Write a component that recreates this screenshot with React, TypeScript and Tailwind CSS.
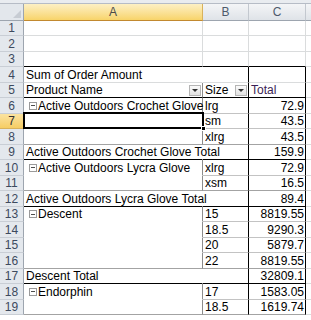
import type { ReactNode } from "react";

type Line = "none" | "grid" | "lite" | "gray" | "black";

type Row = {
  n: number;
  a?: ReactNode;
  b?: string;
  c?: string;
  ab: Line; // bottom of A
  bcb: Line; // bottom of B and C
  ar: Line; // right of A
  br: Line;
  cr: Line;
  sel?: boolean;
};

const lineB: Record<Line, string> = {
  none: "border-b border-b-white",
  grid: "border-b border-b-[#dadcdd]",
  lite: "border-b border-b-[#c3c3c3]",
  gray: "border-b border-b-[#a3a3a3]",
  black: "border-b border-b-black",
};

const lineR: Record<Line, string> = {
  none: "border-r border-r-transparent",
  grid: "border-r border-r-[#dadcdd]",
  lite: "border-r border-r-[#c3c3c3]",
  gray: "border-r border-r-[#8c8c8c]",
  black: "border-r border-r-black",
};

function Toggle({ label }: { label: string }) {
  return (
    <span className="flex items-center pl-[3px]">
      <span className="mr-px flex h-[8px] w-[8px] items-center justify-center border border-[#9a9a9a] bg-white">
        <span className="h-px w-[4px] bg-[#4d4d4d]" />
      </span>
      {label}
    </span>
  );
}

function Drop() {
  return (
    <span className="flex h-[11px] w-[12px] items-center justify-center border border-[#b5b5b5] bg-gradient-to-b from-[#fbfbfb] to-[#e2e2e2]">
      <span className="h-0 w-0 border-x-[3px] border-t-[3px] border-x-transparent border-t-[#333]" />
    </span>
  );
}

const rows: Row[] = [
  { n: 1, ab: "grid", bcb: "grid", ar: "grid", br: "grid", cr: "grid" },
  { n: 2, ab: "grid", bcb: "grid", ar: "grid", br: "grid", cr: "grid" },
  { n: 3, ab: "black", bcb: "black", ar: "grid", br: "grid", cr: "grid" },
  { n: 4, a: "Sum of Order Amount", ab: "grid", bcb: "grid", ar: "none", br: "black", cr: "black" },
  { n: 5, a: "Product Name", b: "Size", c: "Total", ab: "black", bcb: "black", ar: "gray", br: "black", cr: "black" },
  { n: 6, a: <Toggle label="Active Outdoors Crochet Glove" />, b: "lrg", c: "72.9", ab: "none", bcb: "lite", ar: "gray", br: "black", cr: "black" },
  { n: 7, b: "sm", c: "43.5", ab: "none", bcb: "lite", ar: "gray", br: "black", cr: "black", sel: true },
  { n: 8, b: "xlrg", c: "43.5", ab: "gray", bcb: "gray", ar: "gray", br: "black", cr: "black" },
  { n: 9, a: "Active Outdoors Crochet Glove Total", c: "159.9", ab: "black", bcb: "black", ar: "none", br: "black", cr: "black" },
  { n: 10, a: <Toggle label="Active Outdoors Lycra Glove" />, b: "xlrg", c: "72.9", ab: "none", bcb: "lite", ar: "gray", br: "black", cr: "black" },
  { n: 11, b: "xsm", c: "16.5", ab: "gray", bcb: "gray", ar: "gray", br: "black", cr: "black" },
  { n: 12, a: "Active Outdoors Lycra Glove Total", c: "89.4", ab: "black", bcb: "black", ar: "none", br: "black", cr: "black" },
  { n: 13, a: <Toggle label="Descent" />, b: "15", c: "8819.55", ab: "none", bcb: "lite", ar: "gray", br: "black", cr: "black" },
  { n: 14, b: "18.5", c: "9290.3", ab: "none", bcb: "lite", ar: "gray", br: "black", cr: "black" },
  { n: 15, b: "20", c: "5879.7", ab: "none", bcb: "lite", ar: "gray", br: "black", cr: "black" },
  { n: 16, b: "22", c: "8819.55", ab: "gray", bcb: "gray", ar: "gray", br: "black", cr: "black" },
  { n: 17, a: "Descent Total", c: "32809.1", ab: "black", bcb: "black", ar: "none", br: "black", cr: "black" },
  { n: 18, a: <Toggle label="Endorphin" />, b: "17", c: "1583.05", ab: "none", bcb: "lite", ar: "gray", br: "black", cr: "black" },
  { n: 19, b: "18.5", c: "1619.74", ab: "gray", bcb: "gray", ar: "gray", br: "black", cr: "black" },
];

export default function App() {
  return (
    <div
      className="h-[320px] w-[311px] overflow-hidden bg-white text-[12px] leading-none text-black"
      style={{ fontFamily: '"Liberation Sans", Arial, sans-serif' }}
    >
      {/* strip above the grid */}
      <div className="h-[4px] border-b border-[#b6bcc6] bg-[#e9ecf0]" />

      {/* column headers */}
      <div className="flex h-[17px]">
        <div className="relative w-[24px] shrink-0 border-r border-b border-[#9da5af] bg-[#e3e7ec]">
          <span className="absolute bottom-[2px] right-[2px] h-0 w-0 border-b-[8px] border-l-[8px] border-b-[#c7ccd3] border-l-transparent" />
        </div>
        <div className="flex w-[179px] shrink-0 items-center justify-center border-r border-b border-r-[#d9b25c] border-b-[#c2892f] bg-gradient-to-b from-[#fdf0c4] to-[#f8d469] text-[#4b4b4b]">
          A
        </div>
        <div className="flex w-[46px] shrink-0 items-center justify-center border-r border-b border-r-[#c3c8cf] border-b-[#9da5af] bg-gradient-to-b from-[#f4f5f7] to-[#dfe3e8] text-[#4d5a6c]">
          B
        </div>
        <div className="flex w-[57px] shrink-0 items-center justify-center border-r border-b border-r-[#c3c8cf] border-b-[#9da5af] bg-gradient-to-b from-[#f4f5f7] to-[#dfe3e8] text-[#4d5a6c]">
          C
        </div>
        <div className="flex-1 border-b border-[#9da5af] bg-gradient-to-b from-[#f4f5f7] to-[#dfe3e8]" />
      </div>

      {rows.map((r) => (
        <div key={r.n} className={`flex ${r.n % 2 === 1 ? "h-[15px]" : "h-[16px]"}`}>
          <div
            className={`flex w-[24px] shrink-0 items-center justify-center border-r border-b ${
              r.sel
                ? "bg-gradient-to-b from-[#fbe3a0] to-[#f6cd63] border-r-[#c2892f] border-b-[#d9b25c] text-[#333]"
                : "bg-[#e4e8ed] border-r-[#9da5af] border-b-[#c9ced5] text-[#3d4a5e]"
            }`}
          >
            {r.n}
          </div>

          <div
            className={`relative flex w-[179px] shrink-0 items-center whitespace-nowrap ${lineB[r.ab]} ${lineR[r.ar]} ${
              r.n === 5 ? "justify-between pl-[2px] pr-px" : "pl-[2px]"
            } ${r.ar === "none" ? "z-10" : ""}`}
          >
            {r.a}
            {r.n === 5 && <Drop />}
            {r.sel && (
              <>
                <span className="absolute -top-[2px] -left-[1px] -right-[2px] -bottom-[1px] z-20 border-2 border-black" />
                <span className="absolute -bottom-[3px] -right-[4px] z-30 h-[5px] w-[5px] border border-white bg-black" />
              </>
            )}
          </div>

          <div
            className={`flex w-[46px] shrink-0 items-center whitespace-nowrap pl-[2px] ${lineB[r.bcb]} ${lineR[r.br]} ${
              r.n === 5 ? "justify-between pr-px" : ""
            }`}
          >
            {r.b}
            {r.n === 5 && <Drop />}
          </div>

          <div
            className={`flex w-[57px] shrink-0 items-center whitespace-nowrap ${lineB[r.bcb]} ${lineR[r.cr]} ${
              r.n === 5 ? "pl-[2px] text-[#3a1f55]" : "justify-end pr-px"
            }`}
          >
            {r.c}
          </div>

          <div className="flex-1 border-b border-[#dadcdd]" />
        </div>
      ))}
    </div>
  );
}
